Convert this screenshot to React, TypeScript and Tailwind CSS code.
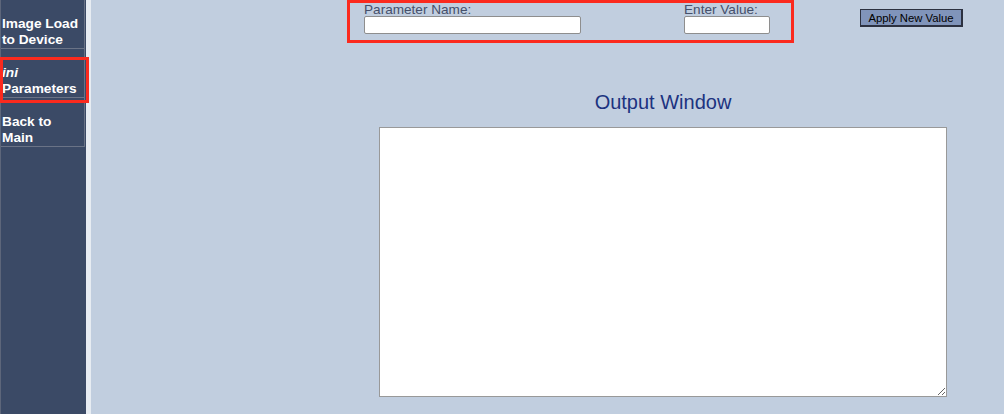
import React from 'react';

const menu = [
  { first: 'Image Load', second: 'to Device', italic: false },
  { first: 'ini', second: 'Parameters', italic: true },
  { first: 'Back to', second: 'Main', italic: false },
];

export default function App() {
  return (
    <div className="flex h-[414px] w-full overflow-hidden bg-[#c1cedf] font-['Liberation_Sans',Arial,sans-serif]">
      {/* Left nav */}
      <aside className="relative w-[86px] shrink-0 border-l border-[#5d667a] bg-[#3b4a66]">
        {menu.map((item) => (
          <div
            key={item.second}
            className="h-[49px] w-[84px] border-b border-r border-[#6a7386] pl-[1px] pt-[16px] text-[13.7px] font-bold leading-[16px] text-white"
          >
            <div className={item.italic ? 'italic' : ''}>{item.first}</div>
            <div>{item.second}</div>
          </div>
        ))}
        {/* highlight */}
        <div className="absolute left-[-1px] top-[57px] z-10 h-[46px] w-[89px] border-[3px] border-[#fb2a1e]" />
      </aside>
      <div className="w-[5px] shrink-0 bg-[#e7ecf2]" />

      {/* Main */}
      <main className="flex-1">
        <div className="flex items-start pl-[256px]">
          <div className="flex h-[43px] w-[447px] justify-between border-[3px] border-[#fb2a1e] pl-[14px] pr-[21px] text-[13.6px] leading-[14px] text-[#45506b]">
            <div>
              <div>Parameter Name:</div>
              <input className="mt-[-1px] h-[18px] w-[217px] rounded-[2px] border border-[#8e8e8e] bg-white" />
            </div>
            <div>
              <div>Enter Value:</div>
              <input className="mt-[-1px] h-[18px] w-[86px] rounded-[2px] border border-[#8e8e8e] bg-white" />
            </div>
          </div>
          <button className="ml-[66px] mt-[9px] h-[18px] w-[103px] border border-[#2c3140] border-b-2 border-r-2 bg-[#8094ba] text-[11.3px] leading-[14px] text-black">
            Apply New Value
          </button>
        </div>

        <div className="ml-[288px] w-[568px]">
          <h2 className="mt-[47px] text-center text-[20px] leading-[24px] text-[#1c3380]">Output Window</h2>
          <textarea className="mt-[13px] block h-[270px] w-[568px] border border-[#999] bg-white" />
        </div>
      </main>
    </div>
  );
}
